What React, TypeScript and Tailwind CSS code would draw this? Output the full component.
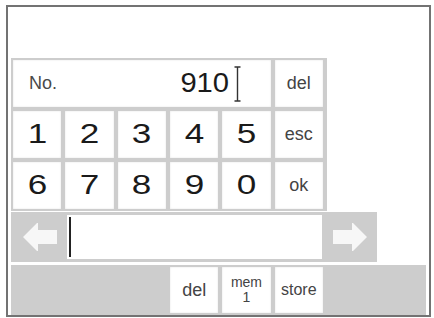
import React from 'react';

const font = { fontFamily: '"Liberation Sans", Arial, sans-serif' };

function Key({ label, small }: { label: string; small?: boolean }) {
  return (
    <div className="h-[47px] bg-white flex items-center justify-center shadow-[inset_0_0_2px_rgba(0,0,0,0.12)]">
      {small ? (
        <span className="text-[18px] text-[#444]">{label}</span>
      ) : (
        <span className="inline-block text-[27px] text-[#1a1a1a] scale-x-[1.3]">{label}</span>
      )}
    </div>
  );
}

function Arrow({ dir }: { dir: 'left' | 'right' }) {
  return (
    <svg width="34" height="28" viewBox="0 0 34 28" className={dir === 'right' ? '-scale-x-100' : ''}>
      <path d="M0 14 L14 0 L15 0 L15 7 L34 7 L34 21 L15 21 L15 28 L14 28 Z" fill="#f7f7f7" />
    </svg>
  );
}

export default function App() {
  return (
    <div className="w-[434px] h-[318px] bg-white pt-[5px] pl-[6px]" style={font}>
      <div className="w-[425px] h-[312px] border-2 border-[#737373] flex flex-col pl-[3px] pr-[3px] pt-[51px]">
        {/* keypad */}
        <div className="w-[316px] bg-[#cdcdcd] pl-[2px] pr-[4px] py-[2px] grid grid-cols-6 gap-[4px]">
          <div className="col-span-5 h-[47px] bg-white flex items-center shadow-[inset_0_0_2px_rgba(0,0,0,0.12)]">
            <span className="pl-[16px] text-[18px] text-[#4a4a4a]">No.</span>
            <span className="flex-1" />
            <span className="text-[27px] text-[#1a1a1a] leading-none inline-block scale-x-[1.08] origin-right">910</span>
            <svg width="7" height="36" viewBox="0 0 7 36" className="ml-[5px] mr-[30px]">
              <path d="M0.5 1 H6.5 M3.5 1 V35 M0.5 35 H6.5" stroke="#333" strokeWidth="1.4" fill="none" />
            </svg>
          </div>
          <Key label="del" small />
          {['1', '2', '3', '4', '5'].map((d) => (
            <Key key={d} label={d} />
          ))}
          <Key label="esc" small />
          {['6', '7', '8', '9', '0'].map((d) => (
            <Key key={d} label={d} />
          ))}
          <Key label="ok" small />
        </div>

        {/* arrow row */}
        <div className="mt-[1px] w-[366px] h-[50px] bg-[#cdcdcd] flex">
          <div className="w-[56px] flex items-center justify-center pl-[1px]">
            <Arrow dir="left" />
          </div>
          <div className="w-[255px] my-[3px] bg-white flex items-center">
            <div className="ml-[2px] w-[1.5px] h-[40px] bg-[#222]" />
          </div>
          <div className="flex-1 flex items-center justify-center">
            <Arrow dir="right" />
          </div>
        </div>

        {/* bottom bar */}
        <div className="mt-[3px] h-[50px] bg-[#cdcdcd] pl-[2px] py-[2px] grid grid-cols-[repeat(6,48.33px)] gap-x-[4px]">
          <div className="col-start-4 bg-white flex items-center justify-center shadow-[inset_0_0_2px_rgba(0,0,0,0.12)]">
            <span className="text-[18px] text-[#444]">del</span>
          </div>
          <div className="bg-white flex flex-col items-center justify-center shadow-[inset_0_0_2px_rgba(0,0,0,0.12)]">
            <span className="text-[14px] leading-[15px] text-[#444]">mem</span>
            <span className="text-[14px] leading-[15px] text-[#444]">1</span>
          </div>
          <div className="bg-white flex items-center justify-center shadow-[inset_0_0_2px_rgba(0,0,0,0.12)]">
            <span className="text-[16px] text-[#444]">store</span>
          </div>
        </div>
      </div>
    </div>
  );
}
